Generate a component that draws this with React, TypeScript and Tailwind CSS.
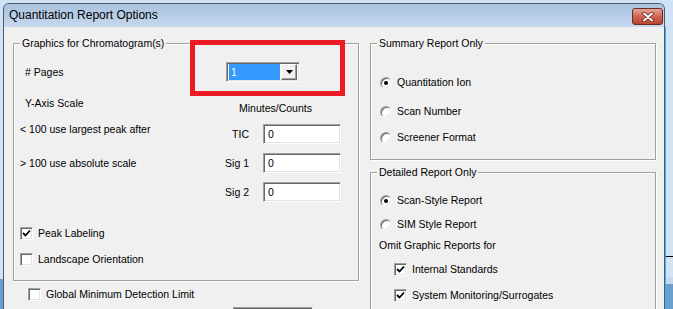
import React from "react";

const sunken =
  "bg-white border border-t-[#a0a0a0] border-l-[#a0a0a0] border-r-white border-b-white shadow-[inset_1px_1px_0_#696969,inset_-1px_-1px_0_#e3e3e3]";

function Check({ checked }: { checked?: boolean }) {
  return (
    <span className={`w-[13px] h-[13px] shrink-0 flex items-center justify-center ${sunken}`}>
      {checked && (
        <svg width="9" height="9" viewBox="0 0 9 9">
          <polyline points="1,4 3.5,6.5 8,1.5" fill="none" stroke="#000" strokeWidth="1.8" />
        </svg>
      )}
    </span>
  );
}

function Radio({ checked }: { checked?: boolean }) {
  return (
    <span className="w-[12px] h-[12px] shrink-0 rounded-full bg-white border border-t-[#a0a0a0] border-l-[#a0a0a0] border-r-[#f8f8f8] border-b-[#f8f8f8] shadow-[inset_1px_1px_0_#696969,inset_-1px_-1px_0_#e3e3e3] flex items-center justify-center">
      {checked && <span className="w-[4px] h-[4px] rounded-full bg-black" />}
    </span>
  );
}

function GroupLabel({ children }: { children: React.ReactNode }) {
  return <div className="-mt-[7px] ml-[6px] px-[2px] w-fit bg-[#f0f0f0] leading-[13px]">{children}</div>;
}

const group = "border border-[#a0a0a0] shadow-[inset_1px_1px_0_#fff,1px_1px_0_#fff]";

function Field({ label }: { label: string }) {
  return (
    <div className="flex items-center h-[20px]">
      <span className="w-[35px] text-right leading-[13px]">{label}</span>
      <div className={`ml-[14px] w-[78px] h-[20px] pl-[4px] flex items-center leading-[13px] ${sunken}`}>0</div>
    </div>
  );
}

export default function App() {
  return (
    <div className="w-[673px] h-[309px] overflow-hidden bg-[#d0e2f6] flex text-[10.5px] text-black font-['Liberation_Sans',Arial,sans-serif] relative">
      {/* left edge of desktop */}
      <div className="w-[3px] flex flex-col">
        <div className="h-[279px]" />
        <div className="flex-1 bg-[#6a9dd0]" />
      </div>

      {/* dialog */}
      <div className="mt-[3px] w-[662px] h-[306px] flex flex-col border-x border-t border-[#4f5a66] rounded-t-[6px] overflow-hidden">
        <div className="h-[23px] shrink-0 flex bg-gradient-to-b from-[#a9c2df] to-[#c6d8ee]">
          <span className="pl-[5px] self-center text-[12px] leading-[15px]">Quantitation Report Options</span>
          <div className="ml-auto mr-[1px] mt-[4px] w-[31px] h-[17px] rounded-[3px] border border-[#6d2b26] bg-gradient-to-b from-[#e3a397] via-[#cf6453] to-[#bb4330] flex items-center justify-center">
            <svg width="12" height="10" viewBox="0 0 12 10">
              <path d="M2 1.5 L10 8.5 M10 1.5 L2 8.5" stroke="#5a2520" strokeWidth="3.6" strokeLinecap="round" />
              <path d="M2 1.5 L10 8.5 M10 1.5 L2 8.5" stroke="#fff" strokeWidth="2" strokeLinecap="round" />
            </svg>
          </div>
        </div>

        <div className="flex-1 bg-[#f0f0f0] flex pl-[9px] pt-[16px]">
          {/* left column */}
          <div className="w-[346px] shrink-0 flex flex-col">
            <div className={`h-[238px] flex flex-col ${group}`}>
              <GroupLabel>Graphics for Chromatogram(s)</GroupLabel>
              <div className="mt-[12px] h-[20px] flex items-center">
                <span className="w-[212px] pl-[11px] leading-[13px]"># Pages</span>
                <div className={`w-[74px] h-[20px] px-[2px] py-[1px] flex gap-[1px] ${sunken}`}>
                  <div className="w-[51px] bg-[#3399ff] text-white pl-[2px] leading-[16px]">1</div>
                  <div className="w-[16px] bg-[#f0f0f0] border border-t-white border-l-white border-r-[#696969] border-b-[#696969] shadow-[inset_-1px_-1px_0_#a0a0a0] flex items-center justify-center">
                    <svg width="7" height="4" viewBox="0 0 7 4">
                      <path d="M0 0 H7 L3.5 4 Z" fill="#000" />
                    </svg>
                  </div>
                </div>
              </div>

              <div className="mt-[14px] flex">
                <div className="w-[200px] pl-[6px] flex flex-col leading-[13px]">
                  <div className="mt-[1px] pl-[5px]">Y-Axis Scale</div>
                  <div className="mt-[13px]">&lt; 100 use largest peak after</div>
                  <div className="mt-[21px]">&gt; 100 use absolute scale</div>
                </div>
                <div className="flex flex-col gap-[9px]">
                  <div className="mt-[6px] pl-[25px] leading-[13px]">Minutes/Counts</div>
                  <Field label="TIC" />
                  <Field label="Sig 1" />
                  <Field label="Sig 2" />
                </div>
              </div>

              <div className="mt-[25px] h-[13px] pl-[6px] flex items-center">
                <Check checked />
                <span className="ml-[5px] leading-[13px]">Peak Labeling</span>
              </div>
              <div className="mt-[13px] h-[13px] pl-[6px] flex items-center">
                <Check />
                <span className="ml-[5px] leading-[13px]">Landscape Orientation</span>
              </div>
            </div>

            <div className="mt-[7px] h-[13px] pl-[15px] flex items-center">
              <Check />
              <span className="ml-[5px] leading-[13px]">Global Minimum Detection Limit</span>
            </div>
            <div className={`mt-[6px] ml-[220px] w-[80px] h-[20px] ${sunken}`} />
          </div>

          {/* right column */}
          <div className="ml-[11px] w-[286px] shrink-0 flex flex-col">
            <div className={`h-[117px] flex flex-col ${group}`}>
              <GroupLabel>Summary Report Only</GroupLabel>
              <div className="mt-[26px] h-[13px] pl-[9px] flex items-center">
                <Radio checked />
                <span className="ml-[5px] leading-[13px]">Quantitation Ion</span>
              </div>
              <div className="mt-[16px] h-[13px] pl-[9px] flex items-center">
                <Radio />
                <span className="ml-[5px] leading-[13px]">Scan Number</span>
              </div>
              <div className="mt-[13px] h-[13px] pl-[9px] flex items-center">
                <Radio />
                <span className="ml-[5px] leading-[13px]">Screener Format</span>
              </div>
            </div>

            <div className={`mt-[12px] h-[160px] flex flex-col ${group}`}>
              <GroupLabel>Detailed Report Only</GroupLabel>
              <div className="mt-[15px] h-[13px] pl-[9px] flex items-center">
                <Radio checked />
                <span className="ml-[5px] leading-[13px]">Scan-Style Report</span>
              </div>
              <div className="mt-[11px] h-[13px] pl-[9px] flex items-center">
                <Radio />
                <span className="ml-[5px] leading-[13px]">SIM Style Report</span>
              </div>
              <div className="mt-[8px] pl-[8px] leading-[13px]">Omit Graphic Reports for</div>
              <div className="mt-[11px] h-[13px] pl-[23px] flex items-center">
                <Check checked />
                <span className="ml-[5px] leading-[13px]">Internal Standards</span>
              </div>
              <div className="mt-[13px] h-[13px] pl-[23px] flex items-center">
                <Check checked />
                <span className="ml-[5px] leading-[13px]">System Monitoring/Surrogates</span>
              </div>
            </div>
          </div>
        </div>
      </div>

      {/* right edge of desktop */}
      <div className="w-[8px] flex flex-col">
        <div className="h-[27px]" />
        <div className="flex-1 flex flex-col border-l border-[#3ab8ec]">
          <div className="h-[229px]" />
          <div className="h-[1px] bg-black" />
          <div className="h-[20px]" />
          <div className="h-[7px] bg-[#c4d8ee]" />
          <div className="flex-1 bg-[#6a9dd0]" />
        </div>
      </div>

      {/* red highlight drawn over the dialog */}
      <div className="absolute left-[190px] top-[40px] w-[155px] h-[56px] border-[5px] border-[#ed1c24]" />
    </div>
  );
}
